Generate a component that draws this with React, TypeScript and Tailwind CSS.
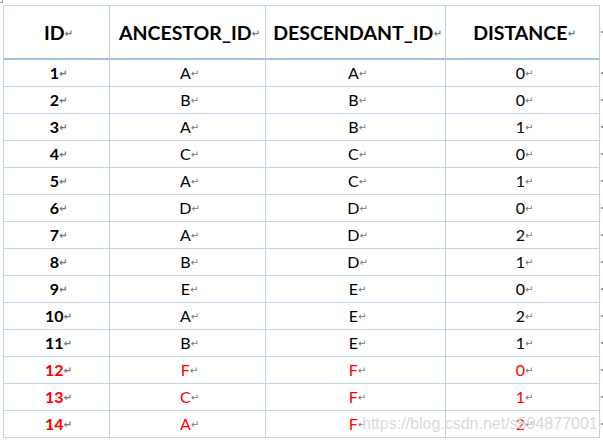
import React from "react";

type Row = { id: string; anc: string; desc: string; dist: string; red?: boolean };

const rows: Row[] = [
  { id: "1", anc: "A", desc: "A", dist: "0" },
  { id: "2", anc: "B", desc: "B", dist: "0" },
  { id: "3", anc: "A", desc: "B", dist: "1" },
  { id: "4", anc: "C", desc: "C", dist: "0" },
  { id: "5", anc: "A", desc: "C", dist: "1" },
  { id: "6", anc: "D", desc: "D", dist: "0" },
  { id: "7", anc: "A", desc: "D", dist: "2" },
  { id: "8", anc: "B", desc: "D", dist: "1" },
  { id: "9", anc: "E", desc: "E", dist: "0" },
  { id: "10", anc: "A", desc: "E", dist: "2" },
  { id: "11", anc: "B", desc: "E", dist: "1" },
  { id: "12", anc: "F", desc: "F", dist: "0", red: true },
  { id: "13", anc: "C", desc: "F", dist: "1", red: true },
  { id: "14", anc: "A", desc: "F", dist: "2", red: true },
];

const Mark = () => (
  <span className="text-[10px] text-[#777] leading-none translate-y-[1px] font-['DejaVu_Sans',sans-serif]">
    ↵
  </span>
);

const Cell: React.FC<{ children: React.ReactNode; className?: string }> = ({ children, className }) => (
  <div className={"flex items-center justify-center border-[#bcd3ea] " + (className ?? "")}>
    {children}
    <Mark />
  </div>
);

const App: React.FC = () => {
  return (
    <div className="relative w-[603px] h-[440px] bg-white overflow-hidden font-['Lato','Open_Sans',sans-serif]">
      {/* corner marker */}
      <div className="absolute left-0 top-0 w-[3px] h-[3px] border-r border-b border-[#9a9a9a]" />
      <div className="pl-[3px] pt-[5px] flex">
        <div className="grid grid-cols-[106px_156px_180px_154px] grid-rows-[54px_repeat(14,27px)] border-l border-t border-[#bcd3ea] w-[597px]">
          {["ID", "ANCESTOR_ID", "DESCENDANT_ID", "DISTANCE"].map((h) => (
            <Cell key={h} className="border-r border-b-2 border-b-[#9dc0e3] text-[19.5px] font-bold text-black pt-[1px] pl-[4px]">
              {h}
            </Cell>
          ))}
          {rows.map((r) => {
            const color = r.red ? "text-[#ff0000]" : "text-black";
            return (
              <React.Fragment key={r.id}>
                <Cell className={"border-r border-b text-[16px] font-bold pl-[4px] " + color}>{r.id}</Cell>
                <Cell className={"border-r border-b text-[16px] pl-[4px] " + color}>{r.anc}</Cell>
                <Cell className={"border-r border-b text-[16px] pl-[4px] " + color}>{r.desc}</Cell>
                <Cell className={"border-r border-b text-[16px] pl-[4px] " + color}>{r.dist}</Cell>
              </React.Fragment>
            );
          })}
        </div>
        <div className="grid grid-rows-[54px_repeat(14,27px)] w-[3px]">
          {Array.from({ length: 15 }).map((_, i) => (
            <div key={i} className="flex items-center pl-[1px]">
              <div className="w-[2px] h-[2px] bg-[#9a9a9a]" />
            </div>
          ))}
        </div>
      </div>
      {/* watermark */}
      <div className="absolute left-[362px] top-[412px] text-[16px] text-[#d4d4d4]/90 font-['Liberation_Sans',sans-serif] [text-shadow:0_0_2px_rgba(255,255,255,1)]">
        https://blog.csdn.net/s594877001
      </div>
    </div>
  );
};

export default App;
